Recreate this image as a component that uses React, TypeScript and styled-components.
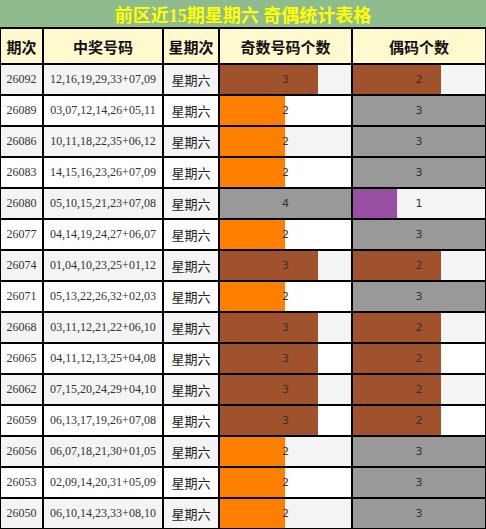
import React from "react";
import styled, { createGlobalStyle } from "styled-components";

const GlobalStyle = createGlobalStyle`
  html, body {
    margin: 0;
    padding: 0;
    background: #ffffff;
  }
  body {
    font-family: "Liberation Serif", "Noto Sans CJK SC", serif;
  }
`;

type Draw = {
  issue: string;
  numbers: string;
  odd: number;
  even: number;
};

const draws: Draw[] = [
  { issue: "26092", numbers: "12,16,19,29,33+07,09", odd: 3, even: 2 },
  { issue: "26089", numbers: "03,07,12,14,26+05,11", odd: 2, even: 3 },
  { issue: "26086", numbers: "10,11,18,22,35+06,12", odd: 2, even: 3 },
  { issue: "26083", numbers: "14,15,16,23,26+07,09", odd: 2, even: 3 },
  { issue: "26080", numbers: "05,10,15,21,23+07,08", odd: 4, even: 1 },
  { issue: "26077", numbers: "04,14,19,24,27+06,07", odd: 2, even: 3 },
  { issue: "26074", numbers: "01,04,10,23,25+01,12", odd: 3, even: 2 },
  { issue: "26071", numbers: "05,13,22,26,32+02,03", odd: 2, even: 3 },
  { issue: "26068", numbers: "03,11,12,21,22+06,10", odd: 3, even: 2 },
  { issue: "26065", numbers: "04,11,12,13,25+04,08", odd: 3, even: 2 },
  { issue: "26062", numbers: "07,15,20,24,29+04,10", odd: 3, even: 2 },
  { issue: "26059", numbers: "06,13,17,19,26+07,08", odd: 3, even: 2 },
  { issue: "26056", numbers: "06,07,18,21,30+01,05", odd: 2, even: 3 },
  { issue: "26053", numbers: "02,09,14,20,31+05,09", odd: 2, even: 3 },
  { issue: "26050", numbers: "06,10,14,23,33+08,10", odd: 2, even: 3 },
];

// bar colours by value, one map per column
const oddColors: Record<number, string> = {
  1: "#984ea3",
  2: "#ff8000",
  3: "#a0522d",
  4: "#999999",
};
const evenColors: Record<number, string> = {
  1: "#984ea3",
  2: "#a0522d",
  3: "#999999",
};
const ODD_MAX = 4;
const EVEN_MAX = 3;

const Page = styled.div`
  width: 486px;
`;

const Title = styled.div`
  height: 28px;
  box-sizing: border-box;
  background: #8fbc8f;
  border-bottom: 1px solid #000;
  display: flex;
  align-items: center;
  justify-content: center;
  color: #ffff00;
  font-family: "Liberation Serif", "Noto Sans CJK SC", serif;
  font-weight: bold;
  font-size: 18px;
  white-space: pre;
`;

const Grid = styled.div`
  display: grid;
  grid-template-columns: 43px 120px 56px 133px 134px;
  grid-template-rows: 36px;
  grid-auto-rows: 31px;
`;

const Cell = styled.div<{ $alt?: boolean }>`
  box-sizing: border-box;
  border: 1px solid #000;
  display: flex;
  align-items: center;
  justify-content: center;
  background: ${(p) => (p.$alt ? "#f4f4f4" : "#ffffff")};
  color: #333;
  white-space: nowrap;
  overflow: hidden;
`;

const HeadCell = styled(Cell)`
  background: #fffacd;
  color: #111;
  font-family: "Noto Sans CJK SC", sans-serif;
  font-weight: bold;
  font-size: 15px;
`;

const NumCell = styled(Cell)`
  font-family: "Liberation Serif", serif;
  font-size: 12px;
`;

const DayCell = styled(Cell)`
  font-family: "Noto Sans CJK SC", sans-serif;
  font-size: 13px;
  color: #222;
`;

const BarCell = styled(Cell)<{ $fill: string; $pct: number }>`
  background: linear-gradient(
    to right,
    ${(p) => p.$fill} ${(p) => p.$pct}%,
    ${(p) => (p.$alt ? "#f4f4f4" : "#ffffff")} ${(p) => p.$pct}%
  );
  font-family: "DejaVu Sans", sans-serif;
  font-size: 11px;
  color: #333;
`;

export default function App(): JSX.Element {
  return (
    <>
      <GlobalStyle />
      <Page>
        <Title>前区近15期星期六 奇偶统计表格</Title>
        <Grid>
          <HeadCell>期次</HeadCell>
          <HeadCell>中奖号码</HeadCell>
          <HeadCell>星期次</HeadCell>
          <HeadCell>奇数号码个数</HeadCell>
          <HeadCell>偶码个数</HeadCell>
          {draws.map((d, i) => {
            const alt = i % 2 === 0;
            return (
              <React.Fragment key={d.issue}>
                <NumCell $alt={alt}>{d.issue}</NumCell>
                <NumCell $alt={alt}>{d.numbers}</NumCell>
                <DayCell $alt={alt}>星期六</DayCell>
                <BarCell
                  $alt={alt}
                  $fill={oddColors[d.odd]}
                  $pct={(d.odd / ODD_MAX) * 100}
                >
                  {d.odd}
                </BarCell>
                <BarCell
                  $alt={alt}
                  $fill={evenColors[d.even]}
                  $pct={(d.even / EVEN_MAX) * 100}
                >
                  {d.even}
                </BarCell>
              </React.Fragment>
            );
          })}
        </Grid>
      </Page>
    </>
  );
}
